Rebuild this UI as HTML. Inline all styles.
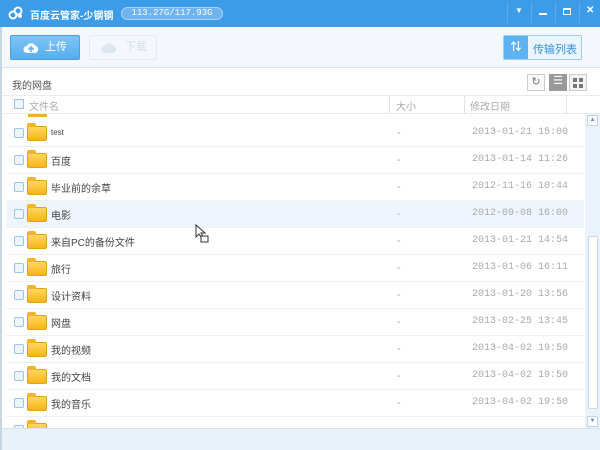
<!DOCTYPE html><html><head><meta charset="utf-8"><style>
*{margin:0;padding:0;box-sizing:border-box}
body{width:600px;height:450px;overflow:hidden;background:#fff;font-family:"Liberation Sans","Noto Sans CJK SC",sans-serif;position:relative;font-size:11px}
.a{position:absolute}
.title{left:0;top:0;width:600px;height:27px;background:#3c9ce8}
.tb{left:0;top:27px;width:600px;height:41px;background:#f4f8fc;border-bottom:1px solid #d8e3ee}
.row{position:absolute;left:6px;width:578px;height:27px;border-bottom:1px solid #eef1f4}
.cb{position:absolute;left:8px;top:8px;width:10px;height:10px;border:1px solid #9cc4e4;background:#eef6fd;border-radius:2px}
.fd{position:absolute;left:21px;top:6px;width:20px;height:15px;background:linear-gradient(#ffd75a,#f5b51c);border-radius:2px;border:1px solid #e0a419}
.fd:before{content:"";position:absolute;left:-1px;top:-4px;width:9px;height:4px;background:#f2b52a;border-radius:2px 2px 0 0}
.nm{position:absolute;left:45px;top:6px;font-size:10px;color:#444}
.sz{position:absolute;left:391px;top:7px;color:#aaa}
.dt{position:absolute;left:466px;top:7px;color:#aaa;font-family:"Liberation Mono",monospace;font-size:10px}
</style></head><body>
<div class="a title">
<svg class="a" style="left:8px;top:6px" width="16" height="14"><circle cx="5" cy="9" r="3.5" fill="none" stroke="#fff" stroke-width="2"/><circle cx="10" cy="5" r="3.5" fill="none" stroke="#fff" stroke-width="2"/><circle cx="12" cy="10" r="2" fill="#fff"/></svg>
<div class="a" style="left:30px;top:7px;color:#fff;font-size:10px;font-weight:bold">百度云管家-少钢钢</div>
<div class="a" style="left:121px;top:7px;width:102px;height:13px;border-radius:7px;background:#6fb4ee;border:1px solid #a9d2f5;color:#fff;font-size:9px;line-height:11px;text-align:center;font-family:'Liberation Mono',monospace">113.27G/117.93G</div>
<div class="a" style="left:507px;top:3px;width:1px;height:20px;background:#5aaced"></div>
<div class="a" style="left:531px;top:3px;width:1px;height:20px;background:#5aaced"></div>
<div class="a" style="left:555px;top:3px;width:1px;height:20px;background:#5aaced"></div>
<div class="a" style="left:579px;top:3px;width:1px;height:20px;background:#5aaced"></div>
<div class="a" style="left:515px;top:6px;color:#fff;font-size:8px">▼</div>
<div class="a" style="left:539px;top:13px;width:8px;height:2px;background:#fff"></div>
<div class="a" style="left:563px;top:8px;width:8px;height:7px;border:1px solid #fff;border-top-width:2px"></div>
<div class="a" style="left:586px;top:5px;color:#fff;font-size:10px;font-weight:bold">✕</div>
</div>
<div class="a tb">
<div class="a" style="left:10px;top:8px;width:70px;height:25px;background:linear-gradient(#7cc4f4,#56aeed);border:1px solid #4aa0e0;border-radius:2px;color:#fff;font-size:11px;line-height:23px"><svg class="a" style="left:12px;top:6px" width="16" height="12"><path d="M4 11 A3.5 3.5 0 0 1 4 4 A4.5 4.5 0 0 1 12 3.5 A3.8 3.8 0 0 1 12 11 Z" fill="#fff"/><path d="M8 10 V5 M5.5 7.5 L8 5 L10.5 7.5" stroke="#5db2ef" stroke-width="1.6" fill="none"/></svg><span style="position:absolute;left:34px">上传</span></div>
<div class="a" style="left:89px;top:8px;width:68px;height:25px;border:1px solid #e3ecf4;border-radius:2px;color:#d2dde8;line-height:23px"><svg class="a" style="left:11px;top:6px" width="16" height="12"><path d="M4 11 A3.5 3.5 0 0 1 4 4 A4.5 4.5 0 0 1 12 3.5 A3.8 3.8 0 0 1 12 11 Z" fill="#dde7f0"/></svg><span style="position:absolute;left:35px">下载</span></div>
<div class="a" style="left:503px;top:8px;width:79px;height:25px;border:1px solid #9ccdf2;border-radius:2px;background:#eaf5fe"><div class="a" style="left:0;top:0;width:24px;height:23px;background:#5db2ef;color:#fff;text-align:center;line-height:23px;font-weight:bold">⇅</div><span class="a" style="left:29px;top:5px;color:#3a8fd8;font-size:11px">传输列表</span></div>
</div>
<div class="a" style="left:12px;top:77px;color:#555;font-size:10px">我的网盘</div>
<div class="a" style="left:527px;top:74px;width:18px;height:17px;border:1px solid #ccc;background:#fafafa;text-align:center;color:#777;font-size:11px;line-height:15px">↻</div>
<div class="a" style="left:549px;top:74px;width:18px;height:17px;background:#999;color:#fff;text-align:center;line-height:15px;font-size:11px">☰</div>
<div class="a" style="left:569px;top:74px;width:18px;height:17px;border:1px solid #ccc;background:#f3f3f3"><div class="a" style="left:3px;top:3px;width:4px;height:4px;background:#777;box-shadow:6px 0 #777,0 6px #777,6px 6px #777"></div></div>
<div class="a" style="left:0;top:95px;width:600px;height:19px;border-top:1px solid #e6ecf2;border-bottom:1px solid #e6ecf2;background:#fff"></div>
<div class="a" style="left:14px;top:99px;width:10px;height:10px;border:1px solid #9cc4e4;background:#eef6fd"></div>
<div class="a" style="left:29px;top:98px;color:#aaa;font-size:10px">文件名</div>
<div class="a" style="left:389px;top:95px;width:1px;height:19px;background:#e3e3e3"></div>
<div class="a" style="left:396px;top:98px;color:#aaa;font-size:10px">大小</div>
<div class="a" style="left:464px;top:95px;width:1px;height:19px;background:#e3e3e3"></div>
<div class="a" style="left:470px;top:98px;color:#aaa;font-size:10px">修改日期</div>
<div class="a" style="left:566px;top:95px;width:1px;height:19px;background:#e3e3e3"></div>
<div class="a" style="left:28px;top:114px;width:19px;height:3px;background:#e8b22a"></div>
<div class="row" style="top:120px"><div class="cb"></div><div class="fd"></div><div class="nm" style="font-size:8px;top:8px">test</div><div class="sz">-</div><div class="dt">2013-01-21 15:00</div></div>
<div class="row" style="top:147px"><div class="cb"></div><div class="fd"></div><div class="nm">百度</div><div class="sz">-</div><div class="dt">2013-01-14 11:26</div></div>
<div class="row" style="top:174px"><div class="cb"></div><div class="fd"></div><div class="nm">毕业前的余草</div><div class="sz">-</div><div class="dt">2012-11-16 10:44</div></div>
<div class="row" style="top:201px;background:#eef5fc"><div class="cb"></div><div class="fd"></div><div class="nm">电影</div><div class="sz">-</div><div class="dt">2012-09-08 16:00</div></div>
<div class="row" style="top:228px"><div class="cb"></div><div class="fd"></div><div class="nm">来自PC的备份文件</div><div class="sz">-</div><div class="dt">2013-01-21 14:54</div></div>
<div class="row" style="top:255px"><div class="cb"></div><div class="fd"></div><div class="nm">旅行</div><div class="sz">-</div><div class="dt">2013-01-06 16:11</div></div>
<div class="row" style="top:282px"><div class="cb"></div><div class="fd"></div><div class="nm">设计资料</div><div class="sz">-</div><div class="dt">2013-01-20 13:56</div></div>
<div class="row" style="top:309px"><div class="cb"></div><div class="fd"></div><div class="nm">网盘</div><div class="sz">-</div><div class="dt">2013-02-25 13:45</div></div>
<div class="row" style="top:336px"><div class="cb"></div><div class="fd"></div><div class="nm">我的视频</div><div class="sz">-</div><div class="dt">2013-04-02 19:50</div></div>
<div class="row" style="top:363px"><div class="cb"></div><div class="fd"></div><div class="nm">我的文档</div><div class="sz">-</div><div class="dt">2013-04-02 19:50</div></div>
<div class="row" style="top:390px"><div class="cb"></div><div class="fd"></div><div class="nm">我的音乐</div><div class="sz">-</div><div class="dt">2013-04-02 19:50</div></div>
<div class="row" style="top:417px"><div class="cb"></div><div class="fd"></div></div>
<svg class="a" style="left:195px;top:224px" width="14" height="20"><path d="M1 1 L1 13 L4 10 L7 15 L9 14 L6 9 L10 9 Z" fill="#fff" stroke="#333"/><rect x="6" y="12" width="7" height="6" fill="#fff" stroke="#333"/></svg>
<div class="a" style="left:585px;top:114px;width:15px;height:314px;background:#eaf3fb"></div>
<div class="a" style="left:587px;top:115px;width:11px;height:11px;border:1px solid #c2d4e4;background:#fff;font-size:6px;color:#6a8aa8;text-align:center;line-height:9px">▲</div>
<div class="a" style="left:588px;top:236px;width:10px;height:173px;border:1px solid #c8d8e6;background:#fff;border-radius:2px"></div>
<div class="a" style="left:587px;top:416px;width:11px;height:11px;border:1px solid #c2d4e4;background:#fff;font-size:6px;color:#6a8aa8;text-align:center;line-height:9px">▼</div>
<div class="a" style="left:0;top:428px;width:600px;height:22px;background:#eaf2f9;border-top:1px solid #d6e2ee"></div>
<div class="a" style="left:0;top:27px;width:2px;height:423px;background:#c8d6e2"></div>
</body></html>
